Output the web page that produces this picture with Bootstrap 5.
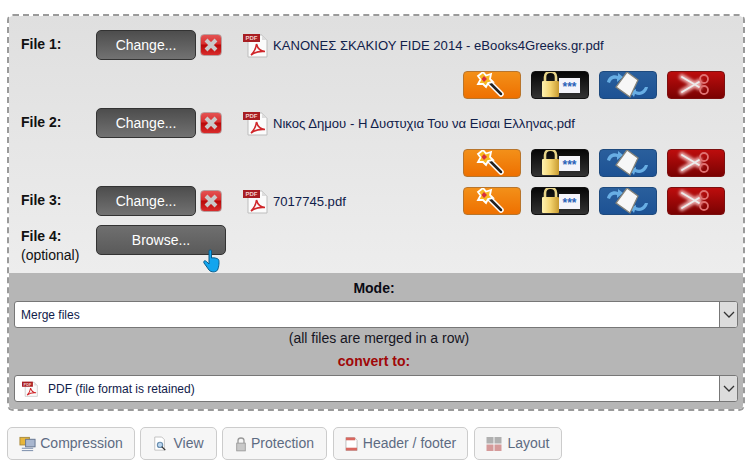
<!DOCTYPE html>
<html lang="en">
<head>
    <meta charset="UTF-8">
    <meta name="viewport" content="width=device-width, initial-scale=1.0">
    <title>PDF Merge</title>
    <link href="https://cdn.jsdelivr.net/npm/bootstrap@5.3.0/dist/css/bootstrap.min.css" rel="stylesheet">
    <style>
        html, body { height: 461px; overflow: hidden; }
        body {
            font-family: "Liberation Sans", Arial, sans-serif;
            font-size: 14px;
            color: #111;
            background: #fff;
            padding: 14px 5px 0 7px;
        }
        .drop-box {
            border: 2px dashed #9a9a9a;
            border-radius: 6px;
            overflow: hidden;
            height: 397px;
        }
        .files-panel {
            height: 257px;
            padding: 14px 18px 0 12px;
            background: linear-gradient(#dfdfdf, #ededed);
        }
        .file-row { height: 30px; }
        .file-label { width: 75px; font-weight: 700; color: #111; line-height: 19px; margin-top: -1px; }
        .file-label span { font-weight: 400; display: block; }
        .file-btn {
            width: 100px;
            height: 30px;
            padding: 0;
            border: 1px solid #333;
            border-radius: 5px;
            color: #fff;
            font-size: 14px;
            background: linear-gradient(#4d4d4d, #727272);
        }
        .file-btn.browse { width: 130px; background: linear-gradient(#6f6f6f, #5a5a5a); }
        .remove-btn {
            width: 22px;
            height: 22px;
            margin-left: 4px;
            padding: 0;
            border: 1px solid #b9a0a0;
            border-radius: 4px;
            background: linear-gradient(#e45252 0, #d83030 45%, #b80808 50%, #d92c2c 100%);
            display: flex;
            align-items: center;
            justify-content: center;
        }
        .pdf-icon { margin-left: 21px; margin-right: 5px; flex: none; }
        .file-name { font-size: 13.1px; color: #10204a; white-space: nowrap; padding-top: 1px; }
        .action-row { height: 28px; margin: 11px 0 9px; gap: 10px; }
        .action-btn {
            width: 58px;
            height: 28px;
            padding: 0;
            border-radius: 4px;
            display: flex;
            align-items: center;
            justify-content: center;
            overflow: hidden;
        }
        .action-btn svg { flex: none; }
        .act-wand { background: linear-gradient(#f39019, #ee7000); border: 1px solid #b8752c; }
        .act-lock { background: linear-gradient(#060606, #333); border: 1px solid #111; }
        .act-rotate { background: linear-gradient(#2a5f9c, #1d5294); border: 1px solid #1e4a7e; }
        .act-cut { background: linear-gradient(#bd0d0d, #7a0202); border: 1px solid #7c1010; }
        .inline-actions { margin-left: auto; gap: 10px; }
        .browse-row { margin-top: 9px; position: relative; }
        .browse-row .file-label { margin-top: 0; padding-top: 2px; }
        .hand-cursor { position: absolute; left: 182px; top: 24px; }
        .mode-panel {
            height: 136px;
            background: #b6b6b6;
            padding: 7px 5px 0 5px;
            text-align: center;
        }
        .mode-title { font-weight: 700; line-height: 16px; color: #0a0a14; margin-bottom: 5px; padding-right: 4px; }
        .mode-note { line-height: 16px; margin-top: 2px; color: #15151f; padding-left: 6px; }
        .convert-title { font-weight: 700; line-height: 16px; color: #a00808; margin: 7px 0 6px; padding-right: 4px; }
        .fake-select {
            height: 27px;
            background: #fff;
            border: 1px solid #777;
            border-radius: 3px;
            font-size: 12px;
            color: #10204a;
            text-align: left;
            overflow: hidden;
        }
        .fake-select .sel-text { padding-left: 6px; flex: 1; white-space: pre; }
        .fake-select .sel-arrow {
            width: 18px;
            height: 100%;
            background: #dcdcdc;
            border-left: 1px solid #777;
            display: flex;
            align-items: center;
            justify-content: center;
        }
        .sel-icon { margin-left: 7px; margin-right: 4px; flex: none; }
        .tool-bar { margin-top: 16px; }
        .tool-btn {
            height: 33px;
            padding: 0;
            gap: 4px;
            border: 1px solid #ccc;
            border-radius: 5px;
            background: #f6f6f6;
            color: #5d6b82;
            font-size: 14px;
            white-space: nowrap;
            display: flex;
            align-items: center;
            justify-content: center;
        }
        .tool-compress { width: 128px; margin-right: 5px; }
        .tool-view { width: 77px; margin-right: 5px; gap: 6px; }
        .tool-protect { width: 105px; margin-right: 6px; }
        .tool-header { width: 135px; margin-right: 6px; gap: 5px; }
        .tool-layout { width: 88px; gap: 5px; }
    </style>
</head>
<body>
    <svg width="0" height="0" class="d-block position-absolute">
        <defs>
            <linearGradient id="goldGrad" x1="0" x2="1" y1="0" y2="0">
                <stop offset="0" stop-color="#fff2b0"/>
                <stop offset="0.5" stop-color="#f3d36f"/>
                <stop offset="1" stop-color="#c99b30"/>
            </linearGradient>
            <filter id="softGlow" x="-30%" y="-30%" width="160%" height="160%">
                <feGaussianBlur stdDeviation="1.500"/>
            </filter>
            <symbol id="pdf" viewBox="0 0 25 25">
                <path d="M5 2H19L24 7V24H5Z" fill="#fbfbfb" stroke="#bdbdbd"/>
                <path d="M19 2V7H24Z" fill="#ddd"/>
                <rect x="0" y="1" width="17" height="8" fill="#a81e22"/>
                <text x="8.500" y="7.400" font-size="6" font-weight="700" fill="#f3d0d0" text-anchor="middle" font-family="Liberation Sans">PDF</text>
                <path d="M8 22C11 19 13 15 13.500 11C14.500 15 17 18 22 18.500C17 18 12 19 8 22Z" fill="none" stroke="#d0262a" stroke-width="1.600"/>
            </symbol>
            <symbol id="xmark" viewBox="0 0 16 16">
                <path d="M3 3L13 13M13 3L3 13" stroke="#c9c9c9" stroke-width="4"/>
            </symbol>
            <symbol id="wand" viewBox="0 0 58 28">
                <path d="M24 9L38 23" stroke="#fff" stroke-width="5.500" stroke-linecap="round"/>
                <path d="M24 9L38 23" stroke="#222" stroke-width="2.500" stroke-linecap="round"/>
                <path d="M20 1L23 4.500L28 3L27 8L30 11L25 12L23 16L20 13L15 13L17.500 8.500L15 5Z" fill="#f9b921" stroke="#fff" stroke-width="1.800"/>
                <path d="M21 5L24 8L21 11L18.500 8Z" fill="#d8303c"/>
            </symbol>
            <symbol id="lock" viewBox="0 0 58 28">
                <path d="M14 11V6C14 -1 25 -1 25 6V11" fill="none" stroke="#e7d488" stroke-width="2.600"/>
                <rect x="11" y="10" width="17" height="16" rx="1" fill="url(#goldGrad)"/>
                <rect x="28" y="7" width="21" height="15" fill="#f4f4fa"/>
                <text x="38.500" y="20" font-size="12" font-weight="700" fill="#2a62b8" text-anchor="middle" font-family="Liberation Sans">***</text>
            </symbol>
            <symbol id="rotate" viewBox="0 0 58 28">
                <path d="M8 11C9 6 14 3 19 5L19 2L24 6L18 11L18 8C15 7 12 8 11 12Z" fill="#68aee4"/>
                <path d="M49 16C48 21 43 26 36 23L35 26L31 21L37 18L37 20C41 22 44 20 46 16Z" fill="#68aee4"/>
                <path d="M28 1L39 9L31 26L17 16Z" fill="#f7f7f7" stroke="#85837a" stroke-width="1.300"/>
            </symbol>
            <symbol id="scissors" viewBox="0 0 58 28">
                <path d="M15 6L32 16M15 21L32 11" stroke="#e9a9a9" stroke-width="6" stroke-linecap="round" filter="url(#softGlow)"/>
                <path d="M15 6L32 16M15 21L32 11" stroke="#ececec" stroke-width="1.800" stroke-linecap="round"/>
                <circle cx="37" cy="8" r="4" fill="none" stroke="#e07070" stroke-width="1.800"/>
                <circle cx="37" cy="19" r="4" fill="none" stroke="#e07070" stroke-width="1.800"/>
            </symbol>
            <symbol id="chev" viewBox="0 0 12 8">
                <path d="M1 1L6 6L11 1" fill="none" stroke="#333" stroke-width="1.300"/>
            </symbol>
        </defs>
    </svg>

    <div class="drop-box">
        <!-- file slots -->
        <div class="files-panel">
            <div class="file-row d-flex align-items-center">
                <div class="file-label">File 1:</div>
                <button type="button" class="btn file-btn">Change...</button>
                <button type="button" class="btn remove-btn"><svg width="16" height="16"><use href="#xmark"/></svg></button>
                <svg class="pdf-icon" width="25" height="25"><use href="#pdf"/></svg>
                <span class="file-name">ΚΑΝΟΝΕΣ ΣΚΑΚΙΟΥ FIDE 2014 - eBooks4Greeks.gr.pdf</span>
            </div>
            <div class="action-row d-flex justify-content-end">
                <button type="button" class="btn action-btn act-wand"><svg width="58" height="28"><use href="#wand"/></svg></button>
                <button type="button" class="btn action-btn act-lock"><svg width="58" height="28"><use href="#lock"/></svg></button>
                <button type="button" class="btn action-btn act-rotate"><svg width="58" height="28"><use href="#rotate"/></svg></button>
                <button type="button" class="btn action-btn act-cut"><svg width="58" height="28"><use href="#scissors"/></svg></button>
            </div>

            <div class="file-row d-flex align-items-center">
                <div class="file-label">File 2:</div>
                <button type="button" class="btn file-btn">Change...</button>
                <button type="button" class="btn remove-btn"><svg width="16" height="16"><use href="#xmark"/></svg></button>
                <svg class="pdf-icon" width="25" height="25"><use href="#pdf"/></svg>
                <span class="file-name">Νικος Δημου - Η Δυστυχια Του να Εισαι Ελληνας.pdf</span>
            </div>
            <div class="action-row d-flex justify-content-end">
                <button type="button" class="btn action-btn act-wand"><svg width="58" height="28"><use href="#wand"/></svg></button>
                <button type="button" class="btn action-btn act-lock"><svg width="58" height="28"><use href="#lock"/></svg></button>
                <button type="button" class="btn action-btn act-rotate"><svg width="58" height="28"><use href="#rotate"/></svg></button>
                <button type="button" class="btn action-btn act-cut"><svg width="58" height="28"><use href="#scissors"/></svg></button>
            </div>

            <div class="file-row d-flex align-items-center">
                <div class="file-label">File 3:</div>
                <button type="button" class="btn file-btn">Change...</button>
                <button type="button" class="btn remove-btn"><svg width="16" height="16"><use href="#xmark"/></svg></button>
                <svg class="pdf-icon" width="25" height="25"><use href="#pdf"/></svg>
                <span class="file-name">7017745.pdf</span>
                <div class="inline-actions d-flex">
                    <button type="button" class="btn action-btn act-wand"><svg width="58" height="28"><use href="#wand"/></svg></button>
                    <button type="button" class="btn action-btn act-lock"><svg width="58" height="28"><use href="#lock"/></svg></button>
                    <button type="button" class="btn action-btn act-rotate"><svg width="58" height="28"><use href="#rotate"/></svg></button>
                    <button type="button" class="btn action-btn act-cut"><svg width="58" height="28"><use href="#scissors"/></svg></button>
                </div>
            </div>

            <div class="file-row browse-row d-flex align-items-start">
                <div class="file-label">File 4:<span>(optional)</span></div>
                <button type="button" class="btn file-btn browse">Browse...</button>
                <svg class="hand-cursor" width="18" height="24" viewBox="0 0 18 24">
                    <path d="M6 2C6 0.500 8.500 0.500 8.500 2V9C10 8.500 14.500 9 15.500 10.500C16.500 12 16 18 14.500 21C13 23.500 8 23.500 6 21L1 14C0 12 2 11 3.500 12.500L6 15Z" fill="#12a5ee" stroke="#0b5d8a"/>
                </svg>
            </div>
        </div>

        <!-- mode and output format -->
        <div class="mode-panel">
            <div class="mode-title">Mode:</div>
            <div class="fake-select d-flex align-items-center">
                <span class="sel-text">Merge files</span>
                <span class="sel-arrow"><svg width="12" height="8"><use href="#chev"/></svg></span>
            </div>
            <div class="mode-note">(all files are merged in a row)</div>
            <div class="convert-title">convert to:</div>
            <div class="fake-select d-flex align-items-center">
                <svg width="16" height="16" class="sel-icon"><use href="#pdf"/></svg>
                <span class="sel-text">PDF (file format is retained)</span>
                <span class="sel-arrow"><svg width="12" height="8"><use href="#chev"/></svg></span>
            </div>
        </div>
    </div>

    <!-- tool tabs -->
    <div class="tool-bar d-flex">
        <button type="button" class="btn tool-btn tool-compress">
            <svg width="17" height="16" viewBox="0 0 18 16"><rect x="1" y="1" width="10" height="8" fill="#e8b63a" stroke="#a98a3c"/><rect x="7" y="3" width="10" height="8" fill="#a9b7cf" stroke="#64748f"/><path d="M3 12.500H15M3 15H15" stroke="#7286a6"/></svg>
            Compression
        </button>
        <button type="button" class="btn tool-btn tool-view">
            <svg width="14" height="18" viewBox="0 0 16 18"><path d="M2 1H10L13 4V16H2Z" fill="#fff" stroke="#bbb"/><circle cx="8" cy="10" r="3" fill="#bcd6ee" stroke="#6a8fb0" stroke-width="1.300"/><path d="M10 12L14 16" stroke="#333" stroke-width="1.600"/></svg>
            View
        </button>
        <button type="button" class="btn tool-btn tool-protect">
            <svg width="12" height="18" viewBox="0 0 14 18"><path d="M3.500 8V5C3.500 1 10.500 1 10.500 5V8" fill="none" stroke="#999" stroke-width="1.500"/><rect x="2" y="8" width="10" height="9" fill="#c8c8c8" stroke="#999"/></svg>
            Protection
        </button>
        <button type="button" class="btn tool-btn tool-header">
            <svg width="13" height="18" viewBox="0 0 14 18"><path d="M1 2H10L13 5V16H1Z" fill="#fff" stroke="#bbb"/><rect x="1" y="2" width="10" height="3" fill="#d9675f"/><rect x="1" y="13" width="12" height="3" fill="#d9675f"/></svg>
            Header / footer
        </button>
        <button type="button" class="btn tool-btn tool-layout">
            <svg width="16" height="16" viewBox="0 0 16 16"><rect x="0.500" y="1" width="7" height="6.500" fill="#b0b0b0"/><rect x="8.500" y="1" width="7" height="6.500" fill="#b0b0b0"/><rect x="0.500" y="8.500" width="7" height="6.500" fill="#d59a9a"/><rect x="8.500" y="8.500" width="7" height="6.500" fill="#d59a9a"/></svg>
            Layout
        </button>
    </div>

    <script src="https://cdn.jsdelivr.net/npm/bootstrap@5.3.0/dist/js/bootstrap.bundle.min.js"></script>
</body>
</html>
